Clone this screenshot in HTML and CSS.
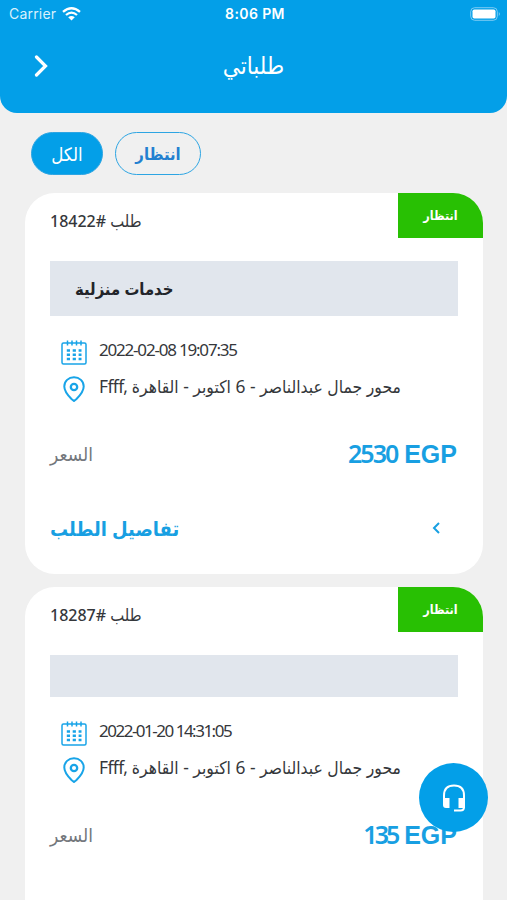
FILE: index.html
```html
<!DOCTYPE html>
<html lang="ar">
<head>
    <meta charset="UTF-8">
    <meta name="viewport" content="width=device-width, initial-scale=1.0">
    <title>طلباتي</title>
    <link rel="stylesheet" href="styles.css">
</head>
<body>
<svg class="symbols">
    <symbol id="calendar" viewBox="0 0 26 25">
        <path d="M4.500 3H2.500Q1 3 1 4.500V22.500Q1 24 2.500 24H23.500Q25 24 25 22.500V4.500Q25 3 23.500 3H4.500M6.500 0.500V5.500M11 0.500V5.500M15.500 0.500V5.500M20 0.500V5.500" fill="none" stroke="#18a4e8" stroke-width="1.500"/>
        <path d="M5.800 10.500H20.500M5.800 14.700H20.500M5.800 19H20.500" fill="none" stroke="#18a4e8" stroke-width="2.600" stroke-dasharray="3.200 2.700"/>
    </symbol>
    <symbol id="pin" viewBox="0 0 22 26">
        <path d="M11 1.200C5.500 1.200 1.300 5.300 1.300 10.500C1.300 15.500 5 19.500 8.500 23L11 25L13.500 23C17 19.500 20.700 15.500 20.700 10.500C20.700 5.300 16.500 1.200 11 1.200Z" fill="none" stroke="#18a4e8" stroke-width="2"/>
        <circle cx="11" cy="11" r="3.200" fill="none" stroke="#18a4e8" stroke-width="2.300"/>
    </symbol>
</svg>

<header class="header">
    <div class="status-bar">
        <div class="carrier">
            <span>Carrier</span>
            <svg class="wifi" viewBox="0 0 19 14" fill="none" stroke="#fff" stroke-width="2.300">
                <path d="M1 4.800Q9.500 -2.400 18 4.800M4 8Q9.500 3.200 15 8"/>
                <path d="M6.200 10.200Q9.500 7.600 12.800 10.200L9.500 13.600Z" fill="#fff" stroke="none"/>
            </svg>
        </div>
        <div class="clock">8:06 PM</div>
        <div class="battery-wrap">
            <svg class="battery" viewBox="0 0 31 14">
                <rect x="0.700" y="0.700" width="26.600" height="12.600" rx="4" fill="none" stroke="#7dcbf3"/>
                <rect x="2.500" y="2.500" width="23" height="9" rx="1.800" fill="#fff"/>
                <path d="M28.800 5Q31 7 28.800 9Z" fill="#7dcbf3"/>
            </svg>
        </div>
    </div>
    <div class="title-bar">
        <svg class="back" viewBox="0 0 14 22"><path d="M2.500 2L11.500 11L2.500 20" fill="none" stroke="#fff" stroke-width="3.200" stroke-linecap="round"/></svg>
        <h1 class="title">طلباتي</h1>
    </div>
</header>

<nav class="filters">
    <button class="filter active">الكل</button>
    <button class="filter">انتظار</button>
</nav>

<main class="orders">
    <section class="card">
        <div class="card-head">
            <div class="order-no">18422# <span class="ar">طلب</span></div>
            <div class="badge">انتظار</div>
        </div>
        <div class="service">خدمات منزلية</div>
        <div class="info">
            <div class="row date"><svg class="calendar"><use href="#calendar"/></svg><span>2022-02-08 19:07:35</span></div>
            <div class="row place"><svg class="pin"><use href="#pin"/></svg><span><span class="street">Ffff,</span> محور جمال عبدالناصر - 6 اكتوبر - القاهرة</span></div>
        </div>
        <div class="price-row">
            <span class="price-label">السعر</span>
            <div class="price"><span class="amount">2530</span> EGP</div>
        </div>
        <div class="details">
            <span>تفاصيل الطلب</span>
            <svg class="arrow" viewBox="0 0 8 12"><path d="M7 1L2 6L7 11" fill="none" stroke="#18a0e2" stroke-width="2"/></svg>
        </div>
    </section>

    <section class="card">
        <div class="card-head">
            <div class="order-no">18287# <span class="ar">طلب</span></div>
            <div class="badge">انتظار</div>
        </div>
        <div class="service empty"></div>
        <div class="info">
            <div class="row date january"><svg class="calendar"><use href="#calendar"/></svg><span>2022-01-20 14:31:05</span></div>
            <div class="row place"><svg class="pin"><use href="#pin"/></svg><span><span class="street">Ffff,</span> محور جمال عبدالناصر - 6 اكتوبر - القاهرة</span></div>
        </div>
        <div class="price-row">
            <span class="price-label">السعر</span>
            <div class="price"><span class="amount small">135</span> EGP</div>
        </div>
    </section>
</main>

<button class="support-btn">
    <svg viewBox="0 0 24 28" fill="none" stroke="#fff" stroke-width="2">
        <path d="M2 15V11.500Q2 1.500 12 1.500Q22 1.500 22 11.500V23Q22 26.500 18.500 26.500H12"/>
        <path d="M1 14H7.500V24H4Q1 24 1 21ZM16.500 14H23V24H16.500Z" fill="#fff" stroke="none"/>
    </svg>
</button>
</body>
</html>
```

FILE: styles.css
```css
* {
    box-sizing: border-box;
}
body {
    margin: 0;
    background: #f0f0f0;
    color: #35373b;
    font-family: "Noto Sans", "DejaVu Sans Condensed", "DejaVu Sans", sans-serif;
}
button {
    font-family: inherit;
    padding: 0;
    cursor: pointer;
}
svg {
    display: block;
    flex: none;
}
.symbols {
    display: none;
}

/* Header */
.header {
    height: 113px;
    background: #039fe8;
    color: white;
    border-radius: 0 0 17px 17px;
}
.status-bar {
    display: grid;
    grid-template-columns: 1fr auto 1fr;
    align-items: center;
    height: 27px;
    padding: 0 6px 0 9px;
    font-family: Inter, sans-serif;
    font-size: 14px;
}
.carrier {
    display: flex;
    align-items: center;
    gap: 6px;
    color: #d9f1fc;
    letter-spacing: 0.2px;
}
.wifi {
    width: 19px;
    height: 14px;
}
.clock {
    font-weight: 600;
    letter-spacing: 0.4px;
}
.battery-wrap {
    display: flex;
    justify-content: flex-end;
}
.battery {
    width: 31px;
    height: 14px;
}
.title-bar {
    display: grid;
    grid-template-columns: 40px 1fr 40px;
    align-items: center;
    height: 78px;
    padding: 0 34px;
}
.back {
    width: 14px;
    height: 22px;
}
.title {
    margin: 0;
    padding-bottom: 4px;
    text-align: center;
    font-size: 24px;
    font-weight: normal;
}

/* Filters */
.filters {
    display: flex;
    gap: 12px;
    padding: 19px 31px 18px;
}
.filter {
    width: 86px;
    height: 43px;
    border: 1px solid #2da5e3;
    border-radius: 22px;
    background: transparent;
    color: #2380d0;
    font-size: 16.5px;
    font-weight: bold;
}
.filter.active {
    width: 72px;
    background: #039fe8;
    color: white;
    font-size: 18.5px;
    font-weight: normal;
}

/* Order cards */
.orders {
    display: flex;
    flex-direction: column;
    gap: 13px;
    height: 707px;
    padding: 0 24px 0 25px;
    overflow: hidden;
}
.card {
    height: 381px;
    flex: none;
    background: white;
    border-radius: 30px;
    overflow: hidden;
}
.card-head {
    display: flex;
    justify-content: space-between;
    height: 68px;
    padding-left: 25px;
}
.order-no {
    height: 55px;
    line-height: 55px;
    font-size: 16px;
    font-weight: 500;
    white-space: nowrap;
    letter-spacing: -1.1px;
}
.order-no .ar {
    font-size: 16.5px;
    letter-spacing: 0;
}
.badge {
    width: 85px;
    height: 45px;
    line-height: 45px;
    background: #28c003;
    color: white;
    text-align: center;
    font-size: 12.5px;
    font-weight: bold;
}
.service {
    display: flex;
    align-items: center;
    height: 55px;
    margin: 0 25px;
    padding-left: 25px;
    background: #e1e6ed;
    color: #222429;
    font-size: 16.5px;
    font-weight: bold;
}
.service.empty {
    height: 42px;
}
.info {
    height: 110px;
    padding: 15px 0 0 36px;
}
.row {
    display: flex;
    align-items: center;
    height: 37px;
    font-size: 17px;
    white-space: nowrap;
}
.date {
    gap: 12px;
    letter-spacing: -1.2px;
}
.january {
    letter-spacing: -1.5px;
}
.calendar {
    width: 26px;
    height: 25px;
    margin-top: 5px;
}
.place {
    gap: 14px;
    padding-left: 2px;
    font-size: 17.4px;
}
.place > span {
    padding-bottom: 2px;
}
.street {
    letter-spacing: -0.6px;
}
.pin {
    width: 22px;
    height: 26px;
    margin-top: 5px;
}
.price-row {
    display: flex;
    justify-content: space-between;
    align-items: center;
    height: 56px;
    padding: 0 26px 0 25px;
}
.price-label {
    color: #73777c;
    font-size: 19px;
}
.price {
    padding-bottom: 2px;
    color: #189fe2;
    font-family: "Liberation Sans", sans-serif;
    font-size: 25px;
    font-weight: bold;
}
.amount {
    font-family: "Noto Sans", sans-serif;
    font-weight: 600;
    letter-spacing: -2px;
}
.amount.small {
    letter-spacing: -3px;
}
.details {
    display: flex;
    justify-content: space-between;
    align-items: center;
    height: 92px;
    padding: 0 43px 0 25px;
    color: #189fe2;
    font-size: 20px;
    font-weight: bold;
}
.arrow {
    width: 8px;
    height: 12px;
}

/* Floating support button */
.support-btn {
    position: fixed;
    right: 19px;
    bottom: 68px;
    display: flex;
    align-items: center;
    justify-content: center;
    width: 69px;
    height: 69px;
    border: none;
    border-radius: 50%;
    background: #039fe8;
}
.support-btn svg {
    width: 24px;
    height: 28px;
}
```
